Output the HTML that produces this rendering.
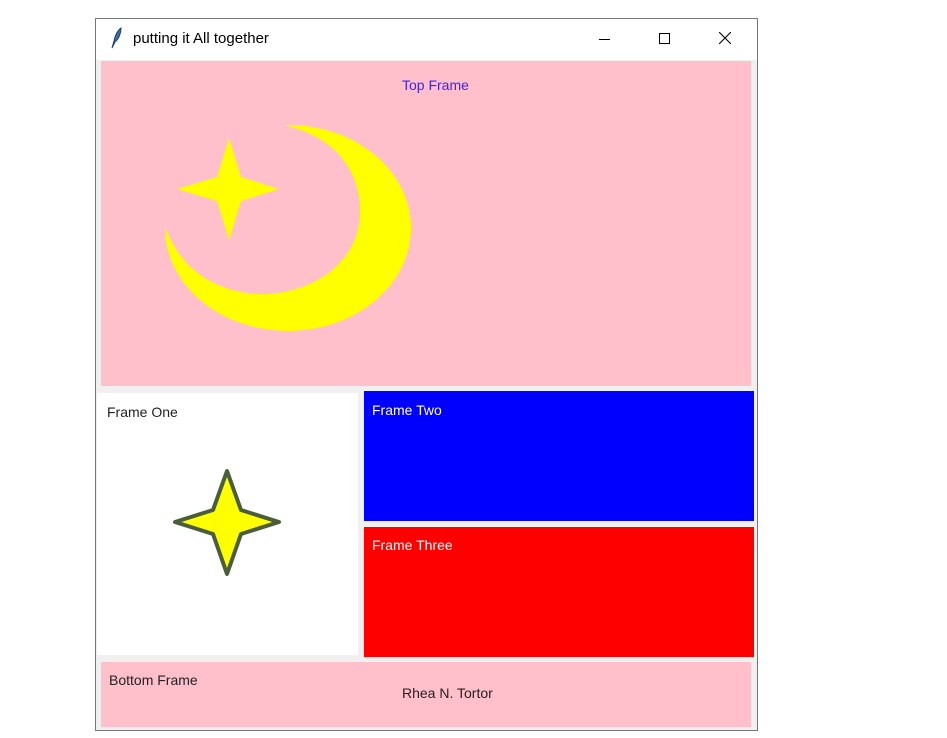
<!DOCTYPE html>
<html><head><meta charset="utf-8"><style>
body{margin:0;width:947px;height:738px;background:#fff;position:relative;overflow:hidden;font-family:"Liberation Sans",sans-serif;}
.win{position:absolute;left:95px;top:18px;width:661px;height:711px;border:1px solid #777;background:#f0f0f0;}
.title{position:absolute;left:0;top:0;width:661px;height:41px;background:#fff;}
.f{position:absolute;font-size:14px;}
</style></head><body>
<div class="win">
 <div class="title">
  <svg style="position:absolute;left:13px;top:8px" width="14" height="22" viewBox="0 0 14 22"><path d="M3 21 L5 14 C6 8 9 3 12 1 C12 6 10 12 6 15 Z" fill="#3b6ea8" stroke="#1d3c66" stroke-width="1"/></svg>
  <span style="position:absolute;left:37px;top:11px;font-size:15px;color:#000">putting it All together</span>
  <div style="position:absolute;left:503px;top:20px;width:11px;height:1px;background:#000"></div>
  <div style="position:absolute;left:563px;top:14px;width:9px;height:9px;border:1px solid #000"></div>
  <svg style="position:absolute;left:623px;top:13px" width="12" height="12"><path d="M0 0L12 12M12 0L0 12" stroke="#000" stroke-width="1.1"/></svg>
 </div>
</div>
<div style="position:absolute;left:101px;top:61px;width:650px;height:325px;background:#ffc0cb"></div>
<div class="f" style="left:402px;top:77px;color:#3a1fff">Top Frame</div>
<svg style="position:absolute;left:0;top:0" width="947" height="738">
 <path d="M283 125 A123 103 0 1 1 165 226 C185 285 240 296 270 294 C330 288 362 250 360 207 C358 165 330 135 283 125 Z" fill="#ffff00"/>
 <path d="M177 189 L217 177 L229 138 L241 177 L279 189 L241 201 L229 240 L217 201 Z" fill="#ffff00"/>
</svg>
<div style="position:absolute;left:97px;top:393px;width:261px;height:262px;background:#fff"></div>
<div class="f" style="left:107px;top:404px;color:#222">Frame One</div>
<svg style="position:absolute;left:0;top:0" width="947" height="738">
 <path d="M175 522 L213 510 L227 471 L241 510 L279 522 L241 534 L227 574 L213 534 Z" fill="#ffff00" stroke="#4b5e3c" stroke-width="4" stroke-linejoin="round"/>
</svg>
<div style="position:absolute;left:364px;top:391px;width:390px;height:130px;background:#0000ff"></div>
<div class="f" style="left:372px;top:402px;color:#fff">Frame Two</div>
<div style="position:absolute;left:364px;top:527px;width:390px;height:130px;background:#ff0000"></div>
<div class="f" style="left:372px;top:537px;color:#fff">Frame Three</div>
<div style="position:absolute;left:101px;top:662px;width:650px;height:65px;background:#ffc0cb"></div>
<div class="f" style="left:109px;top:672px;color:#222">Bottom Frame</div>
<div class="f" style="left:402px;top:685px;color:#222">Rhea N. Tortor</div>
</body></html>
